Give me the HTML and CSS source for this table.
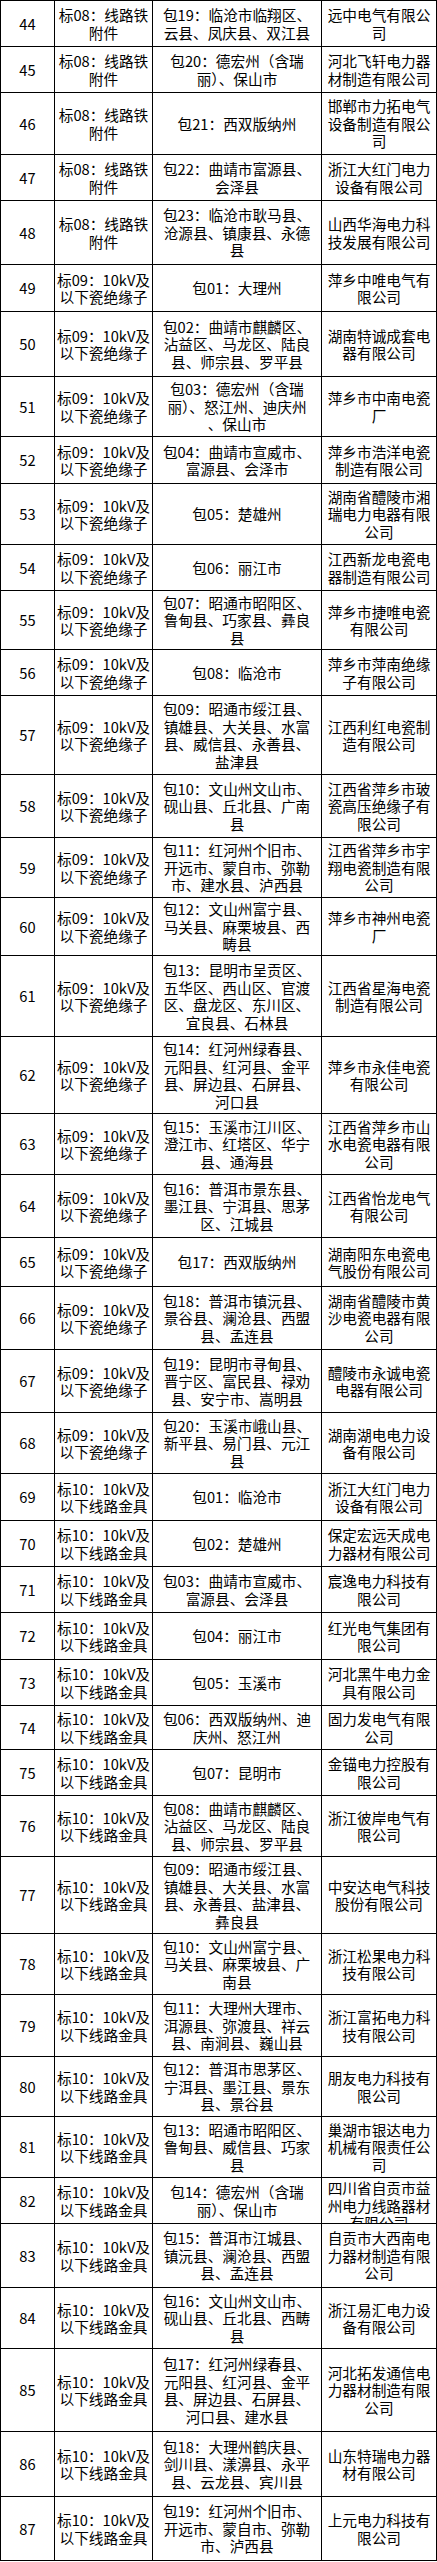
FILE: index.html
```html
<!DOCTYPE html>
<html lang="zh-CN">
<head>
<meta charset="utf-8">
<title>中标结果</title>
<link rel="stylesheet" href="styles.css">
</head>
<body>
<div class="table">
  <div class="row h46"><div class="cell">44</div><div class="cell">标08：线路铁<br>附件</div><div class="cell">包19：临沧市临翔区、<br>云县、凤庆县、双江县</div><div class="cell">远中电气有限公<br>司</div></div>
  <div class="row h46"><div class="cell">45</div><div class="cell">标08：线路铁<br>附件</div><div class="cell">包20：德宏州（含瑞<br>丽）、保山市</div><div class="cell">河北飞轩电力器<br>材制造有限公司</div></div>
  <div class="row h62"><div class="cell">46</div><div class="cell">标08：线路铁<br>附件</div><div class="cell">包21：西双版纳州</div><div class="cell">邯郸市力拓电气<br>设备制造有限公<br>司</div></div>
  <div class="row h46"><div class="cell">47</div><div class="cell">标08：线路铁<br>附件</div><div class="cell">包22：曲靖市富源县、<br>会泽县</div><div class="cell">浙江大红门电力<br>设备有限公司</div></div>
  <div class="row h64"><div class="cell">48</div><div class="cell">标08：线路铁<br>附件</div><div class="cell">包23：临沧市耿马县、<br>沧源县、镇康县、永德<br>县</div><div class="cell">山西华海电力科<br>技发展有限公司</div></div>
  <div class="row h47"><div class="cell">49</div><div class="cell">标09：10kV及<br>以下瓷绝缘子</div><div class="cell">包01：大理州</div><div class="cell">萍乡中唯电气有<br>限公司</div></div>
  <div class="row h65"><div class="cell">50</div><div class="cell">标09：10kV及<br>以下瓷绝缘子</div><div class="cell">包02：曲靖市麒麟区、<br>沾益区、马龙区、陆良<br>县、师宗县、罗平县</div><div class="cell">湖南特诚成套电<br>器有限公司</div></div>
  <div class="row h60"><div class="cell">51</div><div class="cell">标09：10kV及<br>以下瓷绝缘子</div><div class="cell">包03：德宏州（含瑞<br>丽）、怒江州、迪庆州<br>、保山市</div><div class="cell">萍乡市中南电瓷<br>厂</div></div>
  <div class="row h47"><div class="cell">52</div><div class="cell">标09：10kV及<br>以下瓷绝缘子</div><div class="cell">包04：曲靖市宣威市、<br>富源县、会泽市</div><div class="cell">萍乡市浩洋电瓷<br>制造有限公司</div></div>
  <div class="row h61"><div class="cell">53</div><div class="cell">标09：10kV及<br>以下瓷绝缘子</div><div class="cell">包05：楚雄州</div><div class="cell">湖南省醴陵市湘<br>瑞电力电器有限<br>公司</div></div>
  <div class="row h46"><div class="cell">54</div><div class="cell">标09：10kV及<br>以下瓷绝缘子</div><div class="cell">包06：丽江市</div><div class="cell">江西新龙电瓷电<br>器制造有限公司</div></div>
  <div class="row h59"><div class="cell">55</div><div class="cell">标09：10kV及<br>以下瓷绝缘子</div><div class="cell">包07：昭通市昭阳区、<br>鲁甸县、巧家县、彝良<br>县</div><div class="cell">萍乡市捷唯电瓷<br>有限公司</div></div>
  <div class="row h46"><div class="cell">56</div><div class="cell">标09：10kV及<br>以下瓷绝缘子</div><div class="cell">包08：临沧市</div><div class="cell">萍乡市萍南绝缘<br>子有限公司</div></div>
  <div class="row h79"><div class="cell">57</div><div class="cell">标09：10kV及<br>以下瓷绝缘子</div><div class="cell">包09：昭通市绥江县、<br>镇雄县、大关县、水富<br>县、威信县、永善县、<br>盐津县</div><div class="cell">江西利红电瓷制<br>造有限公司</div></div>
  <div class="row h63"><div class="cell">58</div><div class="cell">标09：10kV及<br>以下瓷绝缘子</div><div class="cell">包10：文山州文山市、<br>砚山县、丘北县、广南<br>县</div><div class="cell">江西省萍乡市玻<br>瓷高压绝缘子有<br>限公司</div></div>
  <div class="row h60"><div class="cell">59</div><div class="cell">标09：10kV及<br>以下瓷绝缘子</div><div class="cell">包11：红河州个旧市、<br>开远市、蒙自市、弥勒<br>市、建水县、泸西县</div><div class="cell">江西省萍乡市宇<br>翔电瓷制造有限<br>公司</div></div>
  <div class="row h58"><div class="cell">60</div><div class="cell">标09：10kV及<br>以下瓷绝缘子</div><div class="cell">包12：文山州富宁县、<br>马关县、麻栗坡县、西<br>畴县</div><div class="cell">萍乡市神州电瓷<br>厂</div></div>
  <div class="row h81"><div class="cell">61</div><div class="cell">标09：10kV及<br>以下瓷绝缘子</div><div class="cell">包13：昆明市呈贡区、<br>五华区、西山区、官渡<br>区、盘龙区、东川区、<br>宜良县、石林县</div><div class="cell">江西省星海电瓷<br>制造有限公司</div></div>
  <div class="row h77"><div class="cell">62</div><div class="cell">标09：10kV及<br>以下瓷绝缘子</div><div class="cell">包14：红河州绿春县、<br>元阳县、红河县、金平<br>县、屏边县、石屏县、<br>河口县</div><div class="cell">萍乡市永佳电瓷<br>有限公司</div></div>
  <div class="row h61"><div class="cell">63</div><div class="cell">标09：10kV及<br>以下瓷绝缘子</div><div class="cell">包15：玉溪市江川区、<br>澄江市、红塔区、华宁<br>县、通海县</div><div class="cell">江西省萍乡市山<br>水电瓷电器有限<br>公司</div></div>
  <div class="row h63"><div class="cell">64</div><div class="cell">标09：10kV及<br>以下瓷绝缘子</div><div class="cell">包16：普洱市景东县、<br>墨江县、宁洱县、思茅<br>区、江城县</div><div class="cell">江西省怡龙电气<br>有限公司</div></div>
  <div class="row h49"><div class="cell">65</div><div class="cell">标09：10kV及<br>以下瓷绝缘子</div><div class="cell">包17：西双版纳州</div><div class="cell">湖南阳东电瓷电<br>气股份有限公司</div></div>
  <div class="row h63"><div class="cell">66</div><div class="cell">标09：10kV及<br>以下瓷绝缘子</div><div class="cell">包18：普洱市镇沅县、<br>景谷县、澜沧县、西盟<br>县、孟连县</div><div class="cell">湖南省醴陵市黄<br>沙电瓷电器有限<br>公司</div></div>
  <div class="row h63"><div class="cell">67</div><div class="cell">标09：10kV及<br>以下瓷绝缘子</div><div class="cell">包19：昆明市寻甸县、<br>晋宁区、富民县、禄劝<br>县、安宁市、嵩明县</div><div class="cell">醴陵市永诚电瓷<br>电器有限公司</div></div>
  <div class="row h61"><div class="cell">68</div><div class="cell">标09：10kV及<br>以下瓷绝缘子</div><div class="cell">包20：玉溪市峨山县、<br>新平县、易门县、元江<br>县</div><div class="cell">湖南湖电电力设<br>备有限公司</div></div>
  <div class="row h47"><div class="cell">69</div><div class="cell">标10：10kV及<br>以下线路金具</div><div class="cell">包01：临沧市</div><div class="cell">浙江大红门电力<br>设备有限公司</div></div>
  <div class="row h46"><div class="cell">70</div><div class="cell">标10：10kV及<br>以下线路金具</div><div class="cell">包02：楚雄州</div><div class="cell">保定宏远天成电<br>力器材有限公司</div></div>
  <div class="row h46"><div class="cell">71</div><div class="cell">标10：10kV及<br>以下线路金具</div><div class="cell">包03：曲靖市宣威市、<br>富源县、会泽县</div><div class="cell">宸逸电力科技有<br>限公司</div></div>
  <div class="row h47"><div class="cell">72</div><div class="cell">标10：10kV及<br>以下线路金具</div><div class="cell">包04：丽江市</div><div class="cell">红光电气集团有<br>限公司</div></div>
  <div class="row h46"><div class="cell">73</div><div class="cell">标10：10kV及<br>以下线路金具</div><div class="cell">包05：玉溪市</div><div class="cell">河北黑牛电力金<br>具有限公司</div></div>
  <div class="row h44"><div class="cell">74</div><div class="cell">标10：10kV及<br>以下线路金具</div><div class="cell">包06：西双版纳州、迪<br>庆州、怒江州</div><div class="cell">固力发电气有限<br>公司</div></div>
  <div class="row h46"><div class="cell">75</div><div class="cell">标10：10kV及<br>以下线路金具</div><div class="cell">包07：昆明市</div><div class="cell">金锚电力控股有<br>限公司</div></div>
  <div class="row h61"><div class="cell">76</div><div class="cell">标10：10kV及<br>以下线路金具</div><div class="cell">包08：曲靖市麒麟区、<br>沾益区、马龙区、陆良<br>县、师宗县、罗平县</div><div class="cell">浙江彼岸电气有<br>限公司</div></div>
  <div class="row h77"><div class="cell">77</div><div class="cell">标10：10kV及<br>以下线路金具</div><div class="cell">包09：昭通市绥江县、<br>镇雄县、大关县、水富<br>县、永善县、盐津县、<br>彝良县</div><div class="cell">中安达电气科技<br>股份有限公司</div></div>
  <div class="row h61"><div class="cell">78</div><div class="cell">标10：10kV及<br>以下线路金具</div><div class="cell">包10：文山州富宁县、<br>马关县、麻栗坡县、广<br>南县</div><div class="cell">浙江松果电力科<br>技有限公司</div></div>
  <div class="row h62"><div class="cell">79</div><div class="cell">标10：10kV及<br>以下线路金具</div><div class="cell">包11：大理州大理市、<br>洱源县、弥渡县、祥云<br>县、南涧县、巍山县</div><div class="cell">浙江富拓电力科<br>技有限公司</div></div>
  <div class="row h60"><div class="cell">80</div><div class="cell">标10：10kV及<br>以下线路金具</div><div class="cell">包12：普洱市思茅区、<br>宁洱县、墨江县、景东<br>县、景谷县</div><div class="cell">朋友电力科技有<br>限公司</div></div>
  <div class="row h61"><div class="cell">81</div><div class="cell">标10：10kV及<br>以下线路金具</div><div class="cell">包13：昭通市昭阳区、<br>鲁甸县、威信县、巧家<br>县</div><div class="cell">巢湖市银达电力<br>机械有限责任公<br>司</div></div>
  <div class="row h46"><div class="cell">82</div><div class="cell">标10：10kV及<br>以下线路金具</div><div class="cell">包14：德宏州（含瑞<br>丽）、保山市</div><div class="cell top">四川省自贡市益<br>州电力线路器材<br>有限公司</div></div>
  <div class="row h64"><div class="cell">83</div><div class="cell">标10：10kV及<br>以下线路金具</div><div class="cell">包15：普洱市江城县、<br>镇沅县、澜沧县、西盟<br>县、孟连县</div><div class="cell">自贡市大西南电<br>力器材制造有限<br>公司</div></div>
  <div class="row h61"><div class="cell">84</div><div class="cell">标10：10kV及<br>以下线路金具</div><div class="cell">包16：文山州文山市、<br>砚山县、丘北县、西畴<br>县</div><div class="cell">浙江易汇电力设<br>备有限公司</div></div>
  <div class="row h83"><div class="cell">85</div><div class="cell">标10：10kV及<br>以下线路金具</div><div class="cell">包17：红河州绿春县、<br>元阳县、红河县、金平<br>县、屏边县、石屏县、<br>河口县、建水县</div><div class="cell">河北拓发通信电<br>力器材制造有限<br>公司</div></div>
  <div class="row h65"><div class="cell">86</div><div class="cell">标10：10kV及<br>以下线路金具</div><div class="cell">包18：大理州鹤庆县、<br>剑川县、漾濞县、永平<br>县、云龙县、宾川县</div><div class="cell">山东特瑞电力器<br>材有限公司</div></div>
  <div class="row h64"><div class="cell">87</div><div class="cell">标10：10kV及<br>以下线路金具</div><div class="cell">包19：红河州个旧市、<br>开远市、蒙自市、弥勒<br>市、泸西县</div><div class="cell">上元电力科技有<br>限公司</div></div>
</div>
</body>
</html>
```

FILE: styles.css
```css
html, body {
  margin: 0;
  padding: 0;
  background: #ffffff;
}

body {
  font-family: "Noto Sans CJK SC", "Noto Sans", sans-serif;
  font-size: 14.67px;
  line-height: 17.5px;
  color: #000000;
}

.table {
  width: 437px;
  border-bottom: 1px solid #000000;
}

.row {
  box-sizing: border-box;
  display: grid;
  grid-template-columns: 54px 98px 169px 115px;
  border-top: 1px solid #000000;
  border-left: 1px solid #000000;
}

.cell {
  box-sizing: border-box;
  display: flex;
  align-items: center;
  justify-content: center;
  text-align: center;
  white-space: nowrap;
  overflow: hidden;
  border-right: 1px solid #000000;
  min-width: 0;
}

.cell.top {
  align-items: flex-start;
  padding-top: 1px;
}

.h44 { height: 44px; }
.h46 { height: 46px; }
.h47 { height: 47px; }
.h49 { height: 49px; }
.h58 { height: 58px; }
.h59 { height: 59px; }
.h60 { height: 60px; }
.h61 { height: 61px; }
.h62 { height: 62px; }
.h63 { height: 63px; }
.h64 { height: 64px; }
.h65 { height: 65px; }
.h77 { height: 77px; }
.h79 { height: 79px; }
.h81 { height: 81px; }
.h83 { height: 83px; }
```
